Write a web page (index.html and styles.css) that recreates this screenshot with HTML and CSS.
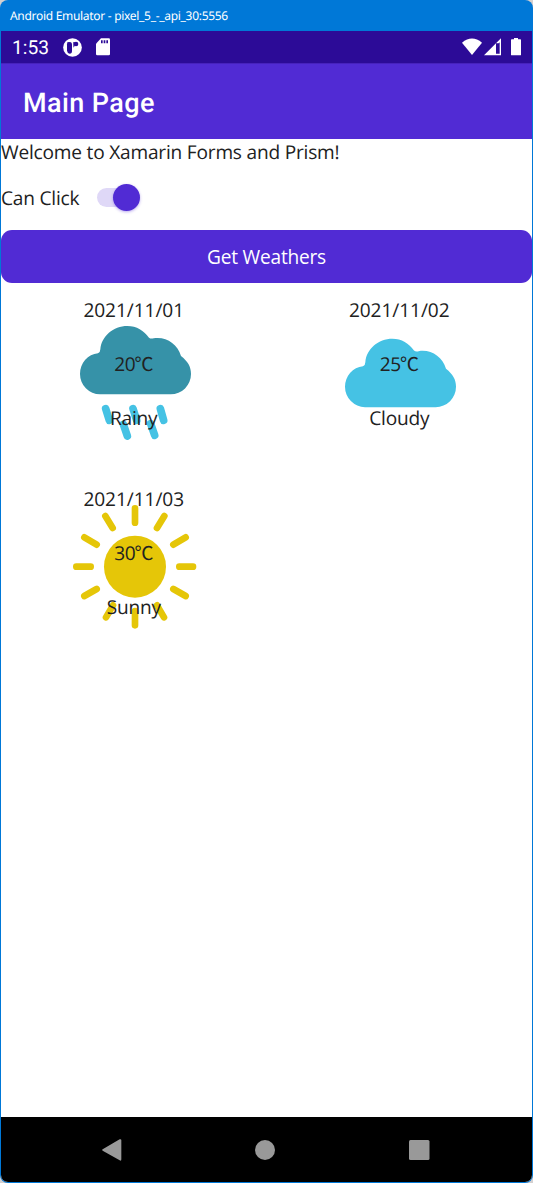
FILE: index.html
```html
<!DOCTYPE html>
<html lang="en">
<head>
<meta charset="utf-8">
<title>Android Emulator</title>
<link rel="stylesheet" href="styles.css">
</head>
<body>
<div class="window">
  <div class="titlebar"><span class="title-text">Android Emulator - pixel_5_-_api_30:5556</span></div>
  <div class="screen">
    <div class="statusbar">
      <span class="clock">1:53</span>
      <svg class="ic-app" width="19" height="19" viewBox="0 0 57 57"><circle cx="28.500" cy="28.500" r="28" fill="#fff"/><path d="M13 13Q18 11 24 13Q27 15 27 20V39Q27 47 20 47Q13 46 12 38V19Z" fill="#2c0b97"/><path d="M31 12H35V25Q32 26 31 30Z" fill="#2c0b97"/><circle cx="39" cy="18" r="7" fill="#2c0b97"/></svg>
      <svg class="ic-sd" width="14" height="18" viewBox="0 0 42 54"><path d="M15 1H38Q42 1 42 5V48Q42 52 38 52H4Q0 52 0 48V17Z" fill="#fff"/><path d="M15 7H20V16H15ZM23 7H28V16H23ZM31 7H36V16H31Z" fill="#2c0b97"/></svg>
      <span class="spacer"></span>
      <svg width="20" height="18" viewBox="0 0 60 54"><path d="M0 14Q30-11 60 14L30 51Z" fill="#fff"/></svg>
      <svg class="ic-signal" width="17" height="18" viewBox="0 0 51 54"><path fill-rule="evenodd" d="M51 1V52H0ZM47 13L44 16H36V47H47Z" fill="#fff"/></svg>
      <svg class="ic-battery" width="10" height="18" viewBox="0 0 30 54"><path d="M9 0H21V4H28Q30 4 30 6V50Q30 52 28 52H2Q0 52 0 50V6Q0 4 2 4H9Z" fill="#fff"/></svg>
    </div>
    <div class="appbar">Main Page</div>
    <main class="content">
      <p class="welcome">Welcome to Xamarin Forms and Prism!</p>
      <div class="toggle-row"><span class="toggle-label">Can Click</span><span class="switch"><span class="thumb"></span></span></div>
      <button class="button">Get Weathers</button>
      <div class="cards">
        <section class="card">
          <svg class="weather" viewBox="-177 -36 796.5 486">
            <path fill="#3692a8" d="M120 298A61 61 0 0 1 60 237C60 204 84 178 114 175Q121 172 121 163C124 124 160 93 202 93C230 93 252 107 267 128Q272 132 281 130C318 124 352 146 363 183C384 200 393 215 393 237A61 61 0 0 1 332 298Z"/>
            <path stroke="#45c2e4" stroke-width="23" stroke-linecap="round" d="M137 341L148 376M219 341L230 376M301 341L311 376M190 388L202 423M272 386L284 421"/>
          </svg>
          <div class="labels"><span class="date">2021/11/01</span><span>20<span class="unit">℃</span></span><span>Rainy</span></div>
        </section>
        <section class="card">
          <svg class="weather" viewBox="-177 -36 796.5 486">
            <path transform="translate(-3 38.500)" fill="#45c2e4" d="M120 298A61 61 0 0 1 60 237C60 204 84 178 114 175Q121 172 121 163C124 124 160 93 202 93C230 93 252 107 267 128Q272 132 281 130C318 124 352 146 363 183C384 200 393 215 393 237A61 61 0 0 1 332 298Z"/>
          </svg>
          <div class="labels"><span class="date">2021/11/02</span><span>25<span class="unit">℃</span></span><span>Cloudy</span></div>
        </section>
        <section class="card">
          <svg class="weather" viewBox="-177 -39 796.5 486">
            <circle cx="225" cy="245" r="93" fill="#e5c608"/>
            <path stroke="#e5c608" stroke-width="20" stroke-linecap="round" d="M225 70V113M225 378V421M49 245H92M358 245H399M136 93L158 129M313 93L291 129M73 157L110 179M377 157L340 179M73 333L110 312M377 333L340 312M138 397L159 361M312 397L291 361"/>
          </svg>
          <div class="labels"><span class="date">2021/11/03</span><span>30<span class="unit">℃</span></span><span>Sunny</span></div>
        </section>
      </div>
    </main>
    <nav class="navbar">
      <svg width="20" height="22" viewBox="0 0 60 66"><path d="M2 31L53 1Q58-1 58 4V61Q58 67 53 64L2 35Q-1 33 2 31Z" fill="#999"/></svg>
      <svg width="20" height="20" viewBox="0 0 20 20"><circle cx="10" cy="10" r="10" fill="#999"/></svg>
      <svg width="21" height="20" viewBox="0 0 21 20"><rect width="20.500" height="20" rx="1.500" fill="#999"/></svg>
    </nav>
  </div>
</div>
</body>
</html>
```
FILE: styles.css
```css
* { box-sizing: border-box; }
body { margin: 0; background: #d4d0d0; text-rendering: geometricPrecision; }
svg { display: block; flex: none; }
.window { width: 533px; height: 1183px; background: #0078d7; border-radius: 8px; overflow: hidden; padding: 0 1px 1px; display: flex; flex-direction: column; }
.titlebar { height: 31px; flex: none; padding-left: 9px; color: #fff; font: 12px/31px "Noto Sans", sans-serif; letter-spacing: -.3px; white-space: nowrap; }
.screen { flex: 1; display: flex; flex-direction: column; background: #fff; border-radius: 0 0 7px 7px; overflow: hidden; }
.statusbar { height: 32px; flex: none; display: flex; align-items: center; background: #2c0b97; padding: 0 11px; color: #fff; }
.clock { font: 19.2px/32px Roboto, sans-serif; width: 51px; padding-top: 2px; }
.ic-sd { margin-left: 13.5px; }
.spacer { flex: 1; }
.ic-signal { margin-left: 2px; }
.ic-battery { margin-left: 10px; }
.appbar { height: 76px; flex: none; background: #512bd4; border-top: 1px solid #4722bd; padding: 2px 0 0 22px; color: #fff; font: 500 27px/75px Roboto, sans-serif; letter-spacing: .4px; }
.content { flex: 1; color: #212121; font: 19.1px/26px "Open Sans", "Noto Sans CJK JP", sans-serif; letter-spacing: -.2px; }
.welcome { margin: 0; height: 27px; line-height: 27px; }
.toggle-row { height: 64px; display: flex; align-items: center; padding-bottom: 2px; }
.toggle-label { width: 96px; padding-top: 1px; }
.switch { width: 42px; height: 19px; border-radius: 10px; background: #dfd8f7; display: flex; align-items: center; justify-content: flex-end; }
.thumb { width: 27px; height: 27px; flex: none; margin-right: -1px; border-radius: 50%; background: #512bd4; box-shadow: 0 1px 3px rgba(81, 43, 212, .4); }
.button { display: block; width: 100%; height: 53px; border: 0; border-radius: 11px; background: #512bd4; color: #fff; font: inherit; letter-spacing: inherit; padding: 1px 0 0; }
.cards { display: grid; grid-template-columns: 1fr 1fr; row-gap: 27px; }
.card { display: grid; height: 162px; }
.weather, .labels { grid-area: 1 / 1; width: 100%; height: 162px; }
.weather { fill: none; }
.labels { display: grid; grid-template-rows: repeat(3, 54px); align-items: center; text-align: center; }
.date { letter-spacing: -.07px; }
.unit { font-size: 19px; line-height: 1; margin-left: -1px; }
.navbar { height: 65px; flex: none; background: #000; display: flex; align-items: center; justify-content: space-between; padding: 0 102.5px 0 101px; }
```
